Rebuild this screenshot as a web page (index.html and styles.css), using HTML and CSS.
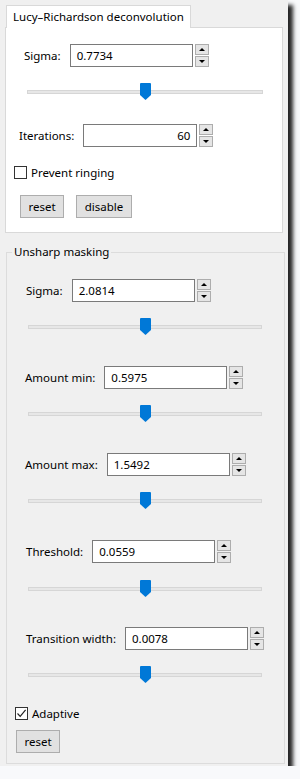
FILE: index.html
```html
<!DOCTYPE html>
<html>
<head>
<meta charset="utf-8">
<link rel="stylesheet" href="styles.css">
</head>
<body>
<div class="window">
  <div class="tabbar"><div class="tab">Lucy–Richardson deconvolution</div></div>
  <div class="tabpanel">
    <div class="row r-sigma1">
      <span class="label">Sigma:</span>
      <div class="input">0.7734</div>
      <div class="spin"><div class="sbtn"><span class="up"></span></div><div class="sbtn"><span class="down"></span></div></div>
    </div>
    <div class="slider s-top"><div class="track"></div><svg class="thumb" width="11" height="17" viewBox="0 0 11 17"><path d="M1 0H10Q11 0 11 1V12L5.5 17L0 12V1Q0 0 1 0Z" fill="#0078d7"/></svg></div>
    <div class="row r-iter">
      <span class="label">Iterations:</span>
      <div class="input narrow right">60</div>
      <div class="spin"><div class="sbtn"><span class="up"></span></div><div class="sbtn"><span class="down"></span></div></div>
    </div>
    <label class="check c-ring"><span class="box"></span>Prevent ringing</label>
    <div class="buttons b-top">
      <div class="btn w-reset">reset</div>
      <div class="btn w-disable">disable</div>
    </div>
  </div>

  <fieldset class="group">
    <legend>Unsharp masking</legend>
    <div class="row r-first r-p19">
      <span class="label">Sigma:</span>
      <div class="input">2.0814</div>
      <div class="spin"><div class="sbtn"><span class="up"></span></div><div class="sbtn"><span class="down"></span></div></div>
    </div>
    <div class="slider s-grp"><div class="track"></div><svg class="thumb" width="11" height="17" viewBox="0 0 11 17"><path d="M1 0H10Q11 0 11 1V12L5.5 17L0 12V1Q0 0 1 0Z" fill="#0078d7"/></svg></div>
    <div class="row r-next r-p18">
      <span class="label">Amount min:</span>
      <div class="input">0.5975</div>
      <div class="spin"><div class="sbtn"><span class="up"></span></div><div class="sbtn"><span class="down"></span></div></div>
    </div>
    <div class="slider s-grp"><div class="track"></div><svg class="thumb" width="11" height="17" viewBox="0 0 11 17"><path d="M1 0H10Q11 0 11 1V12L5.5 17L0 12V1Q0 0 1 0Z" fill="#0078d7"/></svg></div>
    <div class="row r-next r-p18">
      <span class="label">Amount max:</span>
      <div class="input">1.5492</div>
      <div class="spin"><div class="sbtn"><span class="up"></span></div><div class="sbtn"><span class="down"></span></div></div>
    </div>
    <div class="slider s-grp"><div class="track"></div><svg class="thumb" width="11" height="17" viewBox="0 0 11 17"><path d="M1 0H10Q11 0 11 1V12L5.5 17L0 12V1Q0 0 1 0Z" fill="#0078d7"/></svg></div>
    <div class="row r-next r-p19">
      <span class="label">Threshold:</span>
      <div class="input">0.0559</div>
      <div class="spin"><div class="sbtn"><span class="up"></span></div><div class="sbtn"><span class="down"></span></div></div>
    </div>
    <div class="slider s-grp s-17"><div class="track"></div><svg class="thumb" width="11" height="17" viewBox="0 0 11 17"><path d="M1 0H10Q11 0 11 1V12L5.5 17L0 12V1Q0 0 1 0Z" fill="#0078d7"/></svg></div>
    <div class="row r-next r-30 r-p19">
      <span class="label">Transition width:</span>
      <div class="input">0.0078</div>
      <div class="spin"><div class="sbtn"><span class="up"></span></div><div class="sbtn"><span class="down"></span></div></div>
    </div>
    <div class="slider s-grp"><div class="track"></div><svg class="thumb" width="11" height="17" viewBox="0 0 11 17"><path d="M1 0H10Q11 0 11 1V12L5.5 17L0 12V1Q0 0 1 0Z" fill="#0078d7"/></svg></div>
    <label class="check c-adapt"><span class="box"><svg width="11" height="11" viewBox="0 0 11 11"><path d="M1.5 5.5L4.2 8.3L9.6 1.8" fill="none" stroke="#222" stroke-width="1.2"/></svg></span>Adaptive</label>
    <div class="buttons b-grp">
      <div class="btn w-reset">reset</div>
    </div>
  </fieldset>
</div>
</body>
</html>
```

FILE: styles.css
```css
html, body {
  margin: 0;
  padding: 0;
  background: #f8f9fb;
  overflow: hidden;
}
body {
  font-family: "Noto Sans", "Open Sans", sans-serif;
  font-size: 11.5px;
  color: #000;
}
.window {
  width: 288px;
  height: 766px;
  background: #f0f0f0;
  box-shadow: 5px 5px 4px rgba(0, 0, 0, 0.85);
  display: flex;
  flex-direction: column;
  overflow: hidden;
}
.tabbar {
  padding: 5px 0 0 6px;
  display: flex;
}
.tab {
  height: 22px;
  line-height: 21px;
  padding: 0 6px;
  background: #fff;
  border: 1px solid #d9d9d9;
  border-bottom: none;
  margin-bottom: -1px;
  position: relative;
  z-index: 1;
}
.tabpanel {
  margin-left: 5px;
  width: 276px;
  height: 204px;
  background: #fff;
  border: 1px solid #d9d9d9;
  display: flex;
  flex-direction: column;
  align-items: flex-start;
}
.row {
  display: flex;
  align-items: center;
  height: 23px;
}
.label {
  margin-right: 9px;
  white-space: nowrap;
}
.input {
  box-sizing: border-box;
  width: 123px;
  height: 23px;
  border: 1px solid #7a7a7a;
  background: #fff;
  padding: 0 6px;
  line-height: 21px;
}
.input.narrow { width: 114px; }
.input.right { text-align: right; }
.spin {
  margin-left: 2px;
  display: flex;
  flex-direction: column;
  gap: 1px;
}
.sbtn {
  box-sizing: border-box;
  width: 14px;
  height: 11px;
  background: #e5e5e5;
  border: 1px solid #adadad;
  display: flex;
  align-items: center;
  justify-content: center;
}
.up, .down {
  width: 0;
  height: 0;
  border-left: 3px solid transparent;
  border-right: 3px solid transparent;
}
.up { border-bottom: 3px solid #000; }
.down { border-top: 3px solid #000; }

.r-sigma1 { margin-top: 16px; padding-left: 18px; }
.r-iter { margin-top: 24px; padding-left: 13px; }

.slider {
  display: grid;
  height: 17px;
}
.slider .track, .slider .thumb { grid-area: 1 / 1; }
.track {
  align-self: center;
  box-sizing: border-box;
  height: 4px;
  background: #e7e7e7;
  border: 1px solid #d6d6d6;
}
.thumb {
  justify-self: center;
  display: block;
}
.s-top { margin: 16px 0 0 21px; width: 236px; }
.s-grp { margin: 16px 0 0 21px; width: 234px; }
.s-17 { margin-top: 17px; }

.check {
  display: flex;
  align-items: center;
  height: 13px;
  line-height: 13px;
}
.box {
  box-sizing: border-box;
  width: 13px;
  height: 13px;
  border: 1px solid #333;
  background: #fff;
  margin-right: 4px;
  display: flex;
  align-items: center;
  justify-content: center;
}
.c-ring { margin: 19px 0 0 8px; }
.c-adapt { margin: 24px 0 0 8px; }

.buttons {
  display: flex;
  gap: 12px;
}
.b-top { margin: 16px 0 0 14px; }
.b-grp { margin: 10px 0 0 9px; }
.btn {
  box-sizing: border-box;
  height: 23px;
  line-height: 21px;
  text-align: center;
  background: #e1e1e1;
  border: 1px solid #adadad;
}
.w-reset { width: 44px; }
.w-disable { width: 56px; }

.group {
  margin: 11px 0 0 6px;
  padding: 0 0 10px 0;
  width: 279px;
  box-sizing: border-box;
  min-width: 0;
  border: 1px solid #dcdcdc;
  display: flex;
  flex-direction: column;
  align-items: flex-start;
}
.group legend {
  margin-left: 5px;
  padding: 0 2px;
  line-height: 16px;
}
.r-first { margin-top: 19px; }
.r-next { margin-top: 31px; }
.r-30 { margin-top: 30px; }
.r-p19 { padding-left: 19px; }
.r-p18 { padding-left: 18px; }
```
